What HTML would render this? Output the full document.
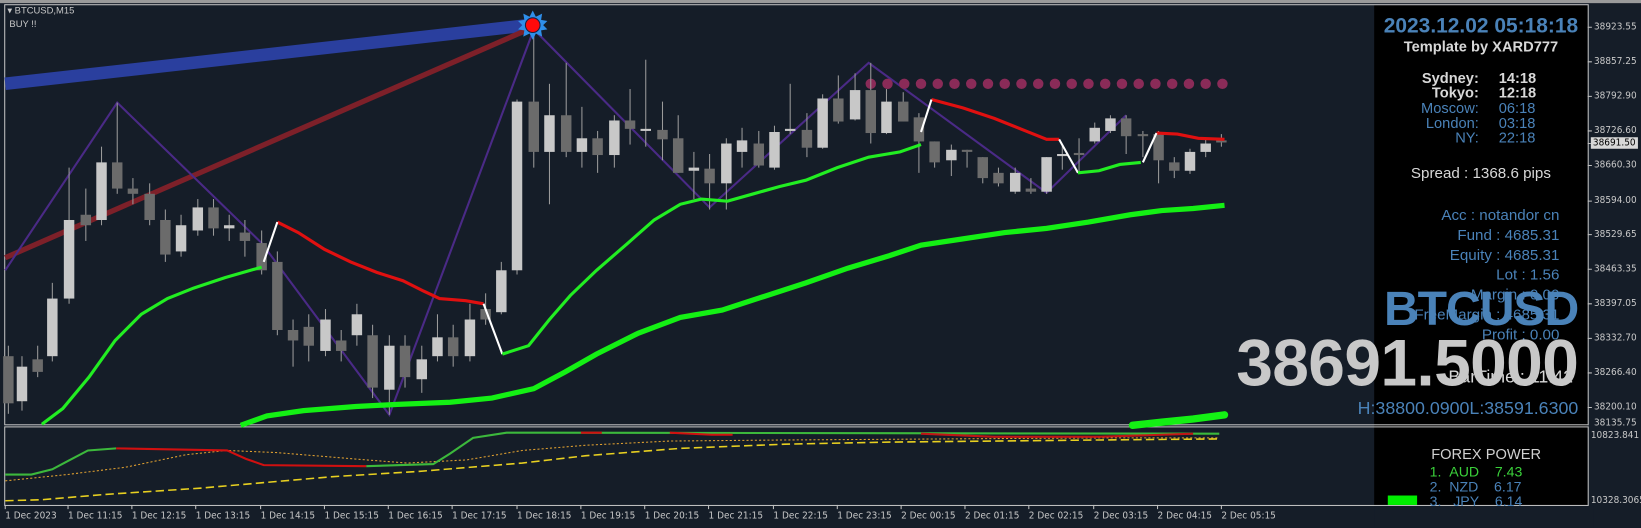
<!DOCTYPE html>
<html><head><meta charset="utf-8"><style>
html,body{margin:0;padding:0;background:#151d28;overflow:hidden;width:1641px;height:528px}
#w{position:absolute;left:0;top:0;width:1568px;height:504px;transform:scale(1.0466,1.0476);transform-origin:0 0;background:#151d28;font-family:"Liberation Sans",sans-serif}
.t{position:absolute;white-space:nowrap}
.ax{position:absolute;font-size:9.5px;color:#c8c8c8;font-family:"DejaVu Sans Condensed","Liberation Sans",sans-serif}
.tl{position:absolute;top:487px;font-size:9.5px;color:#c8c8c8;font-family:"DejaVu Sans Condensed","Liberation Sans",sans-serif;white-space:nowrap}
</style></head><body><div id="w">
<svg width="1568" height="504" style="position:absolute;left:0;top:0">
<rect x="0" y="0" width="1568" height="3" fill="#9a9a9a"/>
<rect x="1313" y="5" width="204" height="477" fill="#000"/>
<rect x="4.5" y="4.5" width="1513" height="401" fill="none" stroke="#c0c0c0"/>
<rect x="4.5" y="407.5" width="1513" height="75" fill="none" stroke="#c0c0c0"/>
<line x1="1517" y1="137" x2="1520" y2="137" stroke="#c0c0c0"/>
<g stroke="#c0c0c0"><line x1="1517" x2="1521" y1="26" y2="26"/><line x1="1517" x2="1521" y1="59" y2="59"/><line x1="1517" x2="1521" y1="92" y2="92"/><line x1="1517" x2="1521" y1="125" y2="125"/><line x1="1517" x2="1521" y1="158" y2="158"/><line x1="1517" x2="1521" y1="192" y2="192"/><line x1="1517" x2="1521" y1="224" y2="224"/><line x1="1517" x2="1521" y1="257" y2="257"/><line x1="1517" x2="1521" y1="290" y2="290"/><line x1="1517" x2="1521" y1="323" y2="323"/><line x1="1517" x2="1521" y1="356" y2="356"/><line x1="1517" x2="1521" y1="389" y2="389"/></g>
<line x1="5" y1="80" x2="505" y2="24" stroke="#2a3f9e" stroke-width="12"/>
<line x1="5" y1="246" x2="505" y2="28" stroke="#7d2029" stroke-width="5"/>
<polyline points="5,258 112,98 250,232 372,396 510,28 678,198 830,60 1000,184 1076,110" fill="none" stroke="#4a2a86" stroke-width="2"/>
<g fill="#8a2b58"><circle cx="832" cy="80" r="5"/><circle cx="848" cy="80" r="5"/><circle cx="864" cy="80" r="5"/><circle cx="880" cy="80" r="5"/><circle cx="896" cy="80" r="5"/><circle cx="912" cy="80" r="5"/><circle cx="928" cy="80" r="5"/><circle cx="944" cy="80" r="5"/><circle cx="960" cy="80" r="5"/><circle cx="976" cy="80" r="5"/><circle cx="992" cy="80" r="5"/><circle cx="1008" cy="80" r="5"/><circle cx="1024" cy="80" r="5"/><circle cx="1040" cy="80" r="5"/><circle cx="1056" cy="80" r="5"/><circle cx="1072" cy="80" r="5"/><circle cx="1088" cy="80" r="5"/><circle cx="1104" cy="80" r="5"/><circle cx="1120" cy="80" r="5"/><circle cx="1136" cy="80" r="5"/><circle cx="1152" cy="80" r="5"/><circle cx="1168" cy="80" r="5"/></g>
<g stroke="#9a9a9a" stroke-width="1">
<line x1="8" x2="8" y1="330" y2="395"/><line x1="21" x2="21" y1="340" y2="392"/><line x1="36" x2="36" y1="330" y2="360"/><line x1="50" x2="50" y1="270" y2="345"/><line x1="66" x2="66" y1="160" y2="290"/><line x1="82" x2="82" y1="180" y2="230"/><line x1="97" x2="97" y1="140" y2="215"/><line x1="112" x2="112" y1="98" y2="185"/><line x1="127" x2="127" y1="170" y2="195"/><line x1="143" x2="143" y1="175" y2="215"/><line x1="158" x2="158" y1="200" y2="250"/><line x1="173" x2="173" y1="205" y2="245"/><line x1="189" x2="189" y1="190" y2="225"/><line x1="204" x2="204" y1="190" y2="225"/><line x1="219" x2="219" y1="205" y2="230"/><line x1="234" x2="234" y1="210" y2="245"/><line x1="250" x2="250" y1="220" y2="262"/><line x1="265" x2="265" y1="240" y2="320"/><line x1="280" x2="280" y1="305" y2="350"/><line x1="295" x2="295" y1="300" y2="345"/><line x1="311" x2="311" y1="295" y2="340"/><line x1="326" x2="326" y1="315" y2="345"/><line x1="341" x2="341" y1="290" y2="330"/><line x1="356" x2="356" y1="310" y2="380"/><line x1="372" x2="372" y1="320" y2="396"/><line x1="387" x2="387" y1="320" y2="370"/><line x1="403" x2="403" y1="330" y2="375"/><line x1="418" x2="418" y1="300" y2="345"/><line x1="433" x2="433" y1="310" y2="350"/><line x1="449" x2="449" y1="290" y2="345"/><line x1="464" x2="464" y1="280" y2="310"/><line x1="479" x2="479" y1="250" y2="300"/><line x1="494" x2="494" y1="95" y2="262"/><line x1="510" x2="510" y1="28" y2="160"/><line x1="525" x2="525" y1="80" y2="195"/><line x1="541" x2="541" y1="60" y2="150"/><line x1="556" x2="556" y1="102" y2="160"/><line x1="571" x2="571" y1="125" y2="165"/><line x1="587" x2="587" y1="110" y2="160"/><line x1="602" x2="602" y1="85" y2="138"/><line x1="617" x2="617" y1="57" y2="140"/><line x1="633" x2="633" y1="97" y2="153"/><line x1="648" x2="648" y1="110" y2="165"/><line x1="663" x2="663" y1="145" y2="190"/><line x1="678" x2="678" y1="147" y2="200"/><line x1="694" x2="694" y1="132" y2="200"/><line x1="709" x2="709" y1="122" y2="160"/><line x1="725" x2="725" y1="125" y2="160"/><line x1="740" x2="740" y1="120" y2="162"/><line x1="755" x2="755" y1="80" y2="128"/><line x1="771" x2="771" y1="108" y2="150"/><line x1="786" x2="786" y1="90" y2="142"/><line x1="801" x2="801" y1="72" y2="118"/><line x1="817" x2="817" y1="70" y2="115"/><line x1="832" x2="832" y1="60" y2="137"/><line x1="847" x2="847" y1="85" y2="128"/><line x1="863" x2="863" y1="88" y2="116"/><line x1="878" x2="878" y1="108" y2="165"/><line x1="893" x2="893" y1="135" y2="160"/><line x1="909" x2="909" y1="138" y2="168"/><line x1="924" x2="924" y1="143" y2="160"/><line x1="939" x2="939" y1="150" y2="175"/><line x1="954" x2="954" y1="160" y2="178"/><line x1="970" x2="970" y1="160" y2="185"/><line x1="985" x2="985" y1="170" y2="185"/><line x1="1000" x2="1000" y1="150" y2="185"/><line x1="1015" x2="1015" y1="138" y2="162"/><line x1="1031" x2="1031" y1="132" y2="165"/><line x1="1046" x2="1046" y1="117" y2="137"/><line x1="1061" x2="1061" y1="110" y2="127"/><line x1="1076" x2="1076" y1="110" y2="147"/><line x1="1092" x2="1092" y1="125" y2="150"/><line x1="1107" x2="1107" y1="125" y2="175"/><line x1="1122" x2="1122" y1="150" y2="170"/><line x1="1137" x2="1137" y1="142" y2="166"/><line x1="1152" x2="1152" y1="132" y2="150"/><line x1="1167" x2="1167" y1="128" y2="140"/>
</g>
<g fill="#c8c8c8">
<rect x="16" y="350" width="10" height="33"/><rect x="45" y="285" width="10" height="55"/><rect x="61" y="210" width="10" height="75"/><rect x="92" y="155" width="10" height="55"/><rect x="168" y="215" width="10" height="25"/><rect x="184" y="198" width="10" height="22"/><rect x="214" y="215" width="10" height="3"/><rect x="306" y="305" width="10" height="30"/><rect x="336" y="300" width="10" height="20"/><rect x="367" y="330" width="10" height="42"/><rect x="398" y="343" width="10" height="19"/><rect x="413" y="322" width="10" height="18"/><rect x="444" y="305" width="10" height="35"/><rect x="474" y="258" width="10" height="40"/><rect x="489" y="97" width="10" height="161"/><rect x="520" y="110" width="10" height="35"/><rect x="551" y="132" width="10" height="13"/><rect x="582" y="115" width="10" height="33"/><rect x="612" y="123" width="10" height="2"/><rect x="658" y="160" width="10" height="3"/><rect x="689" y="137" width="10" height="38"/><rect x="704" y="134" width="10" height="11"/><rect x="735" y="126" width="10" height="34"/><rect x="750" y="123" width="10" height="2"/><rect x="781" y="94" width="10" height="47"/><rect x="812" y="86" width="10" height="28"/><rect x="842" y="97" width="10" height="30"/><rect x="904" y="143" width="10" height="10"/><rect x="965" y="165" width="10" height="18"/><rect x="995" y="150" width="10" height="33"/><rect x="1010" y="147" width="10" height="2"/><rect x="1041" y="122" width="10" height="13"/><rect x="1056" y="113" width="10" height="12"/><rect x="1132" y="145" width="10" height="18"/><rect x="1147" y="137" width="10" height="8"/>
</g>
<g fill="#6b6b6b">
<rect x="3" y="340" width="10" height="45"/><rect x="31" y="343" width="10" height="12"/><rect x="77" y="205" width="10" height="10"/><rect x="107" y="155" width="10" height="25"/><rect x="122" y="180" width="10" height="5"/><rect x="138" y="185" width="10" height="25"/><rect x="153" y="210" width="10" height="33"/><rect x="199" y="198" width="10" height="20"/><rect x="229" y="222" width="10" height="8"/><rect x="245" y="232" width="10" height="26"/><rect x="260" y="250" width="10" height="65"/><rect x="275" y="315" width="10" height="10"/><rect x="290" y="312" width="10" height="18"/><rect x="321" y="325" width="10" height="10"/><rect x="351" y="320" width="10" height="50"/><rect x="382" y="330" width="10" height="30"/><rect x="428" y="322" width="10" height="18"/><rect x="459" y="295" width="10" height="10"/><rect x="505" y="97" width="10" height="48"/><rect x="536" y="110" width="10" height="35"/><rect x="566" y="132" width="10" height="16"/><rect x="597" y="115" width="10" height="8"/><rect x="628" y="124" width="10" height="9"/><rect x="643" y="132" width="10" height="33"/><rect x="673" y="161" width="10" height="14"/><rect x="720" y="137" width="10" height="21"/><rect x="766" y="124" width="10" height="17"/><rect x="796" y="94" width="10" height="22"/><rect x="827" y="86" width="10" height="41"/><rect x="858" y="97" width="10" height="19"/><rect x="873" y="112" width="10" height="23"/><rect x="888" y="135" width="10" height="20"/><rect x="919" y="143" width="10" height="2"/><rect x="934" y="150" width="10" height="20"/><rect x="949" y="165" width="10" height="10"/><rect x="980" y="180" width="10" height="3"/><rect x="1026" y="146" width="10" height="2"/><rect x="1071" y="113" width="10" height="17"/><rect x="1087" y="128" width="10" height="2"/><rect x="1102" y="128" width="10" height="25"/><rect x="1117" y="155" width="10" height="8"/><rect x="1162" y="134" width="10" height="2"/>
</g>
<polyline points="265,212 285,222 310,238 335,250 360,260 385,268 405,278 420,285 445,287 462,290" fill="none" stroke="#e01010" stroke-width="3"/>
<polyline points="890,95 920,103 950,113 980,125 1000,133 1012,133" fill="none" stroke="#e01010" stroke-width="3"/>
<polyline points="1105,127 1125,128 1145,132 1170,133" fill="none" stroke="#e01010" stroke-width="3"/>
<g stroke="#fff" stroke-width="2"><line x1="265" y1="212" x2="252" y2="250"/><line x1="462" y1="290" x2="480" y2="338"/><line x1="890" y1="95" x2="880" y2="126"/><line x1="1012" y1="133" x2="1030" y2="165"/><line x1="1105" y1="127" x2="1092" y2="155"/></g>
<polyline points="40,405 60,390 85,360 110,325 135,300 160,285 185,275 215,265 250,255" fill="none" stroke="#22ee22" stroke-width="3"/>
<polyline points="480,338 505,330 525,305 545,282 570,258 600,232 625,210 650,195 670,190 695,192 720,185 745,178 770,172 800,160 830,150 860,145 880,138" fill="none" stroke="#22ee22" stroke-width="3"/>
<polyline points="1030,165 1050,163 1070,157 1090,155" fill="none" stroke="#22ee22" stroke-width="3"/>
<polyline points="230,406 255,397 290,392 340,388 380,386 430,384 470,380 510,371 540,355 570,338 610,318 650,303 690,296 730,283 770,270 810,256 850,244 880,234 920,228 960,222 1000,218 1040,212 1080,205 1110,201 1140,199 1170,196" fill="none" stroke="#14f014" stroke-width="5"/>
<polyline points="1082,406 1110,403 1140,400 1170,396" fill="none" stroke="#14f014" stroke-width="7" stroke-linecap="round"/>
<polygon points="509,10 512,16 518,13 517,19 523,20 519,24 523,28 517,29 518,35 512,32 509,38 506,32 500,35 501,29 495,28 499,24 495,20 501,19 500,13 506,16" fill="#2f8fea"/>
<circle cx="509" cy="24" r="7" fill="#ff0a0a" stroke="#1a2040" stroke-width="1"/>
<!-- subwindow -->
<polyline points="5,459 64,453 120,446 178,434 217,430 264,432 350,439 389,442 446,439 499,430 560,425 640,421 750,420 900,419 1050,418 1165,418" fill="none" stroke="#e0a030" stroke-width="1" stroke-dasharray="2,2"/>
<polyline points="5,478 40,477 100,472 191,466 260,460 318,455 400,450 499,442 560,435 650,428 750,424 850,422 950,421 1050,420 1165,419" fill="none" stroke="#e8d020" stroke-width="1.5" stroke-dasharray="8,4"/>
<polyline points="5,453 30,453 50,448 65,440 84,430 111,428" fill="none" stroke="#3cb83c" stroke-width="2"/>
<polyline points="111,428 217,430 235,438 252,444 350,445" fill="none" stroke="#d01010" stroke-width="2"/>
<polyline points="350,445 414,443 430,433 452,418 484,413 520,413 1165,414" fill="none" stroke="#3cb83c" stroke-width="2"/>
<polyline points="555,413 575,413" fill="none" stroke="#d01010" stroke-width="2"/>
<polyline points="640,413 680,415 700,415" fill="none" stroke="#d01010" stroke-width="2"/>
<polyline points="880,414 950,417 1050,417 1110,415 1140,414" fill="none" stroke="#c01515" stroke-width="2"/>
<rect x="1326" y="473" width="28" height="9" fill="#00ee00"/>
<g stroke="#c0c0c0"><line x1="5" x2="5" y1="482" y2="486"/><line x1="65" x2="65" y1="482" y2="486"/><line x1="126" x2="126" y1="482" y2="486"/><line x1="187" x2="187" y1="482" y2="486"/><line x1="249" x2="249" y1="482" y2="486"/><line x1="310" x2="310" y1="482" y2="486"/><line x1="371" x2="371" y1="482" y2="486"/><line x1="432" x2="432" y1="482" y2="486"/><line x1="494" x2="494" y1="482" y2="486"/><line x1="555" x2="555" y1="482" y2="486"/><line x1="616" x2="616" y1="482" y2="486"/><line x1="677" x2="677" y1="482" y2="486"/><line x1="739" x2="739" y1="482" y2="486"/><line x1="800" x2="800" y1="482" y2="486"/><line x1="861" x2="861" y1="482" y2="486"/><line x1="922" x2="922" y1="482" y2="486"/><line x1="983" x2="983" y1="482" y2="486"/><line x1="1045" x2="1045" y1="482" y2="486"/><line x1="1106" x2="1106" y1="482" y2="486"/><line x1="1167" x2="1167" y1="482" y2="486"/></g>
</svg>
<div class="t" style="left:7px;top:5px;font-size:9px;color:#c8c8c8">&#9662; BTCUSD,M15</div>
<div class="t" style="left:9px;top:18px;font-size:9px;color:#c8c8c8">BUY !!</div>
<div class="t" style="left:1313px;width:204px;text-align:center;top:14px;font-size:20px;font-weight:bold;color:#4a82b8">2023.12.02 05:18:18</div>
<div class="t" style="left:1313px;width:204px;text-align:center;top:36px;font-size:14px;font-weight:bold;color:#d8d8d8">Template by XARD777</div>
<div class="t" style="left:1313px;width:100px;text-align:right;top:67px;font-size:14px;line-height:14.3px;color:#d8d8d8;font-weight:bold">Sydney:<br>Tokyo:<br><span style="font-weight:normal;color:#4a82b8">Moscow:<br>London:<br>NY:</span></div>
<div class="t" style="left:1432px;top:67px;font-size:14px;line-height:14.3px;color:#d8d8d8;font-weight:bold">14:18<br>12:18<br><span style="font-weight:normal;color:#4a82b8">06:18<br>03:18<br>22:18</span></div>
<div class="t" style="left:1313px;width:204px;text-align:center;top:158px;font-size:14.5px;color:#d8d8d8">Spread : 1368.6 pips</div>
<div class="t" style="left:1313px;width:177px;text-align:right;top:197px;font-size:14.5px;line-height:19px;color:#4a82b8">Acc : notandor cn<br>Fund : 4685.31<br>Equity : 4685.31<br>Lot : 1.56<br>Margin : 0.00<br>FreeMargin : 4685.31<br>Profit : 0.00</div>
<div class="t" style="left:1313px;width:190px;text-align:right;top:350px;font-size:17px;color:#d8d8d8">BarTime : 11:42</div>
<div class="t" style="left:1250px;width:258px;text-align:right;top:267px;font-size:46px;font-weight:bold;color:#4a82b8;letter-spacing:-1px">BTCUSD</div>
<div class="t" style="left:1100px;width:408px;text-align:right;top:311px;font-size:63px;font-weight:bold;color:#c8c8c8;letter-spacing:-0.6px">38691.5000</div>
<div class="t" style="left:1100px;width:408px;text-align:right;top:380px;font-size:17px;color:#4a82b8">H:38800.0900L:38591.6300</div>
<div class="t" style="left:1313px;width:214px;text-align:center;top:425px;font-size:14px;color:#d0d0d0">FOREX POWER</div>
<div class="t" style="left:1366px;top:444px;font-size:13.5px;line-height:14px;color:#4a82b8"><span style="color:#3ad03a">1.&nbsp;&nbsp;AUD&nbsp;&nbsp;&nbsp;&nbsp;7.43</span><br>2.&nbsp;&nbsp;NZD&nbsp;&nbsp;&nbsp;&nbsp;6.17<br>3.&nbsp;&nbsp;&nbsp;JPY&nbsp;&nbsp;&nbsp;&nbsp;6.14</div>
<div style="position:absolute;left:1313px;top:483px;width:210px;height:21px;background:#151d28"></div>
<div class="ax" style="left:1523px;top:20px">38923.55</div>
<div class="ax" style="left:1523px;top:53px">38857.25</div>
<div class="ax" style="left:1523px;top:86px">38792.90</div>
<div class="ax" style="left:1523px;top:119px">38726.60</div>
<div class="ax" style="left:1520px;top:131px;background:#d8d8d8;color:#000;padding:0 2px">38691.50</div>
<div class="ax" style="left:1523px;top:152px">38660.30</div>
<div class="ax" style="left:1523px;top:186px">38594.00</div>
<div class="ax" style="left:1523px;top:218px">38529.65</div>
<div class="ax" style="left:1523px;top:251px">38463.35</div>
<div class="ax" style="left:1523px;top:284px">38397.05</div>
<div class="ax" style="left:1523px;top:317px">38332.70</div>
<div class="ax" style="left:1523px;top:350px">38266.40</div>
<div class="ax" style="left:1523px;top:383px">38200.10</div>
<div class="ax" style="left:1523px;top:398px">38135.75</div>
<div class="ax" style="left:1520px;top:410px">10823.841</div>
<div class="ax" style="left:1520px;top:472px">10328.3065</div>
<div class="tl" style="left:5px">1 Dec 2023</div>
<div class="tl" style="left:65px">1 Dec 11:15</div>
<div class="tl" style="left:126px">1 Dec 12:15</div>
<div class="tl" style="left:187px">1 Dec 13:15</div>
<div class="tl" style="left:249px">1 Dec 14:15</div>
<div class="tl" style="left:310px">1 Dec 15:15</div>
<div class="tl" style="left:371px">1 Dec 16:15</div>
<div class="tl" style="left:432px">1 Dec 17:15</div>
<div class="tl" style="left:494px">1 Dec 18:15</div>
<div class="tl" style="left:555px">1 Dec 19:15</div>
<div class="tl" style="left:616px">1 Dec 20:15</div>
<div class="tl" style="left:677px">1 Dec 21:15</div>
<div class="tl" style="left:739px">1 Dec 22:15</div>
<div class="tl" style="left:800px">1 Dec 23:15</div>
<div class="tl" style="left:861px">2 Dec 00:15</div>
<div class="tl" style="left:922px">2 Dec 01:15</div>
<div class="tl" style="left:983px">2 Dec 02:15</div>
<div class="tl" style="left:1045px">2 Dec 03:15</div>
<div class="tl" style="left:1106px">2 Dec 04:15</div>
<div class="tl" style="left:1167px">2 Dec 05:15</div>
</div></body></html>
